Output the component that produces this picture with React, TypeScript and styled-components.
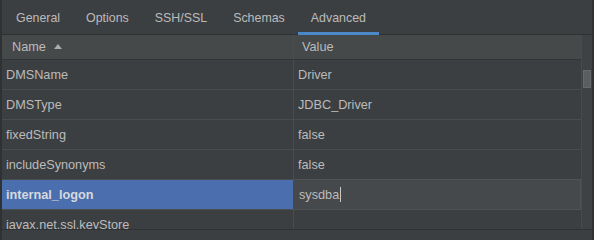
import styled, { createGlobalStyle } from "styled-components";

const Global = createGlobalStyle`
  body {
    margin: 0;
    background: #3c3f41;
    font-family: "Liberation Sans", Arial, sans-serif;
  }
`;

const Frame = styled.div`
  width: 594px;
  height: 240px;
  box-sizing: border-box;
  border-left: 2px solid #2f3133;
  border-right: 2px solid #2f3133;
  background: #3c3f41;
  display: flex;
  flex-direction: column;
  overflow: hidden;
`;

const TabBar = styled.div`
  height: 35px;
  flex-shrink: 0;
  display: flex;
  padding-left: 1px;
  box-shadow: inset 0 -1px 0 #2f3133;
`;

const Tab = styled.div<{ $active?: boolean }>`
  padding: 0 13px;
  display: flex;
  align-items: center;
  font-size: 12.4px;
  color: #bbbbbb;
  box-sizing: border-box;
  border-bottom: 3px solid ${(p) => (p.$active ? "#4a88c7" : "transparent")};
  padding-top: 3px;
`;

const Body = styled.div`
  height: 194px;
  display: flex;
  flex-shrink: 0;
  border-bottom: 1px solid #2f3133;
`;

const Table = styled.div`
  flex: 1;
  display: flex;
  flex-direction: column;
  overflow: hidden;
`;

const Row = styled.div<{ $header?: boolean }>`
  display: grid;
  grid-template-columns: 291px 1fr;
  flex-shrink: 0;
  height: ${(p) => (p.$header ? "25px" : "30px")};
  box-sizing: border-box;
  border-bottom: 1px solid ${(p) => (p.$header ? "#323436" : "#4a4d50")};
  background: ${(p) => (p.$header ? "#45494a" : "#3c3f41")};
`;

const Cell = styled.div<{ $selected?: boolean; $pad?: number; $bold?: boolean }>`
  display: flex;
  align-items: center;
  box-sizing: border-box;
  padding-left: ${(p) => p.$pad ?? 4}px;
  font-size: 12.7px;
  font-weight: ${(p) => (p.$bold ? 700 : 400)};
  color: ${(p) => (p.$selected ? "#d6d9dc" : "#bbbbbb")};
  background: ${(p) => (p.$selected ? "#4b6eaf" : "transparent")};
  white-space: nowrap;
  & + & {
    border-left: 1px solid #4a4d50;
  }
`;

const Editor = styled.div`
  display: flex;
  align-items: center;
  box-sizing: border-box;
  margin: -1px 0 -1px 0;
  padding-left: 6px;
  background: #46494b;
  border: 1px solid #505355;
  border-left: none;
  font-size: 12.7px;
  color: #bbbbbb;
`;

const Caret = styled.span`
  display: inline-block;
  width: 1px;
  height: 15px;
  background: #c8c8c8;
  margin-left: 1px;
`;

const SortArrow = styled.span`
  display: inline-block;
  margin-left: 8px;
  width: 0;
  height: 0;
  border-left: 4px solid transparent;
  border-right: 4px solid transparent;
  border-bottom: 5px solid #a9acae;
  margin-top: -2px;
`;

const Track = styled.div`
  width: 11px;
  flex-shrink: 0;
  background: #3e4244;
  border-left: 1px solid #484b4d;
  box-sizing: border-box;
  padding: 35px 0 0 1px;
`;

const Thumb = styled.div`
  width: 8px;
  height: 18px;
  background: #5b5e60;
  border: 1px solid #66696b;
  box-sizing: border-box;
`;

const rows = [
  { name: "DMSName", value: "Driver" },
  { name: "DMSType", value: "JDBC_Driver" },
  { name: "fixedString", value: "false" },
  { name: "includeSynonyms", value: "false" },
  { name: "internal_logon", value: "sysdba", editing: true },
  { name: "javax.net.ssl.keyStore", value: "" },
];

export default function App() {
  return (
    <>
      <Global />
      <Frame>
        <TabBar>
          <Tab>General</Tab>
          <Tab>Options</Tab>
          <Tab>SSH/SSL</Tab>
          <Tab>Schemas</Tab>
          <Tab $active>Advanced</Tab>
        </TabBar>
        <Body>
          <Table>
            <Row $header>
              <Cell $pad={10}>
                Name
                <SortArrow />
              </Cell>
              <Cell $pad={8}>Value</Cell>
            </Row>
            {rows.map((r) => (
              <Row key={r.name}>
                <Cell $selected={r.editing} $bold={r.editing}>
                  {r.name}
                </Cell>
                {r.editing ? (
                  <Editor>
                    {r.value}
                    <Caret />
                  </Editor>
                ) : (
                  <Cell>{r.value}</Cell>
                )}
              </Row>
            ))}
          </Table>
          <Track>
            <Thumb />
          </Track>
        </Body>
      </Frame>
    </>
  );
}
